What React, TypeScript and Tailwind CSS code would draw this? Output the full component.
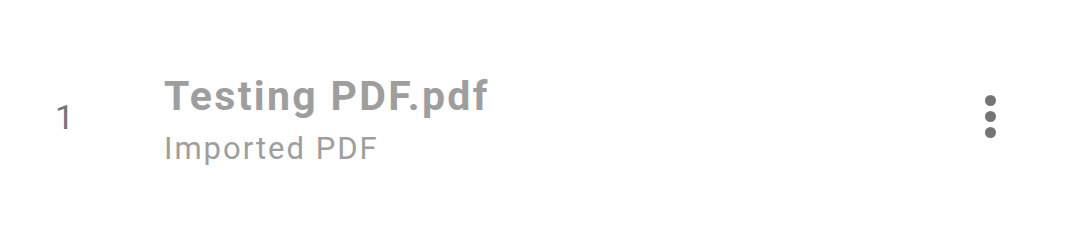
export default function App() {
  return (
    <div className="w-[1071px] h-[232px] bg-white flex items-center font-['Roboto',sans-serif]">
      <div className="w-[164px] pl-[55px] mt-[2px] text-[34px] text-[#757575] leading-[34px] tracking-[1px]">1</div>
      <div className="flex-1 flex flex-col mt-[11px]">
        <div className="text-[41px] font-bold text-[#9e9e9e] leading-[54px] tracking-[2.3px]">Testing PDF.pdf</div>
        <div className="text-[31px] text-[#9e9e9e] leading-[52px] tracking-[2px]">Imported PDF</div>
      </div>
      <button className="w-[60px] h-[60px] mr-[51px] flex flex-col items-center justify-center gap-[5px]">
        <span className="w-[11px] h-[11px] rounded-full bg-[#757575]" />
        <span className="w-[11px] h-[11px] rounded-full bg-[#757575]" />
        <span className="w-[11px] h-[11px] rounded-full bg-[#757575]" />
      </button>
    </div>
  );
}
